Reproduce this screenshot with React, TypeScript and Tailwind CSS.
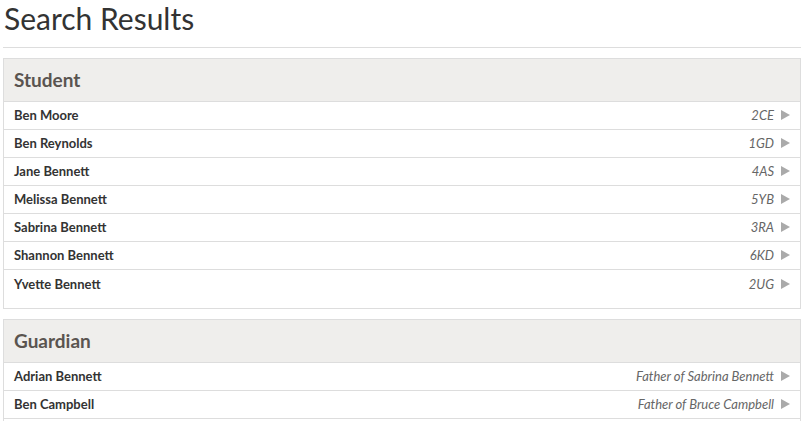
const students = [
  { name: 'Ben Moore', info: '2CE' },
  { name: 'Ben Reynolds', info: '1GD' },
  { name: 'Jane Bennett', info: '4AS' },
  { name: 'Melissa Bennett', info: '5YB' },
  { name: 'Sabrina Bennett', info: '3RA' },
  { name: 'Shannon Bennett', info: '6KD' },
  { name: 'Yvette Bennett', info: '2UG' },
];

const guardians = [
  { name: 'Adrian Bennett', info: 'Father of Sabrina Bennett' },
  { name: 'Ben Campbell', info: 'Father of Bruce Campbell' },
];

type Item = { name: string; info: string };

const Arrow = () => (
  <svg width="9" height="10" viewBox="0 0 9 10" className="shrink-0">
    <path d="M0 0 L9 5 L0 10 Z" fill="#aaaaaa" />
  </svg>
);

const Panel = ({ title, items, more }: { title: string; items: Item[]; more?: boolean }) => (
  <div className={`border border-[#dddddd] mb-[10px] ${more ? 'border-b-0 pb-[20px]' : ''}`}>
    <div className="h-[43px] flex items-center px-[10px] bg-[#efeeec] border-b border-[#dddddd]">
      <h2 className="text-[19px] font-bold text-[#5a5450]">{title}</h2>
    </div>
    <ul className={more ? '' : 'pb-[10px]'}>
      {items.map((item, i) => (
        <li
          key={item.name}
          className={`h-[28px] flex items-center justify-between px-[10px] text-[13px] leading-[18px] pb-[1px] ${
            more || i < items.length - 1 ? 'border-b border-[#dddddd]' : ''
          }`}
        >
          <span className="font-bold text-[#333333]">{item.name}</span>
          <span className="flex items-center gap-[7px] italic text-[#666666]">
            {item.info}
            <Arrow />
          </span>
        </li>
      ))}
    </ul>
  </div>
);

export default function App() {
  return (
    <div className="w-[806px] h-[421px] overflow-hidden bg-white px-[3px] font-['Lato',sans-serif]">
      <h1 className="text-[30px] leading-[37px] text-[#333333] pl-[1px] pb-[10px]">Search Results</h1>
      <div className="w-[798px] border-t border-[#dddddd] mb-[10px]" />
      <div className="w-[798px]">
        <Panel title="Student" items={students} />
        <Panel title="Guardian" items={guardians} more />
      </div>
    </div>
  );
}
